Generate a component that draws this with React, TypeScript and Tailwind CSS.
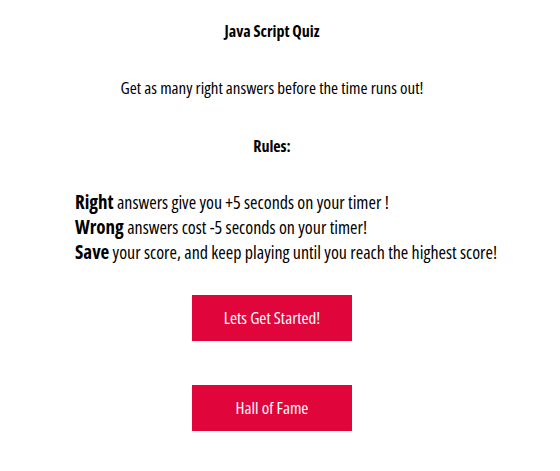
const rules = [
  { lead: 'Right', rest: 'answers give you +5 seconds on your timer !' },
  { lead: 'Wrong', rest: 'answers cost -5 seconds on your timer!' },
  { lead: 'Save', rest: 'your score, and keep playing until you reach the highest score!' },
]

const QuizStart = () => {
  return (
    <div className="w-[544px] font-['Open_Sans',sans-serif] font-stretch-condensed text-black">
      <h1 className="pt-[19px] text-center text-[16px] font-bold leading-6">
        Java Script Quiz
      </h1>
      <p className="mt-[33px] text-center text-[17px] leading-6">
        Get as many right answers before the time runs out!
      </p>
      <h2 className="mt-[34px] text-center text-[16px] font-bold leading-6">
        Rules:
      </h2>
      <div className="mt-[32px] pl-[75px]">
        {rules.map((r) => (
          <div key={r.lead} className="text-[18px] leading-[25px]">
            <span className="text-[19px] font-bold">{r.lead}</span> {r.rest}
          </div>
        ))}
      </div>
      <div className="mt-[30px] flex flex-col items-center gap-[44px]">
        <button className="h-[46px] w-[160px] bg-[#e0063c] text-[17px] text-white">
          Lets Get Started!
        </button>
        <button className="h-[46px] w-[160px] bg-[#e0063c] text-[17px] text-white">
          Hall of Fame
        </button>
      </div>
    </div>
  )
}

export default function App() {
  return <QuizStart />
}
